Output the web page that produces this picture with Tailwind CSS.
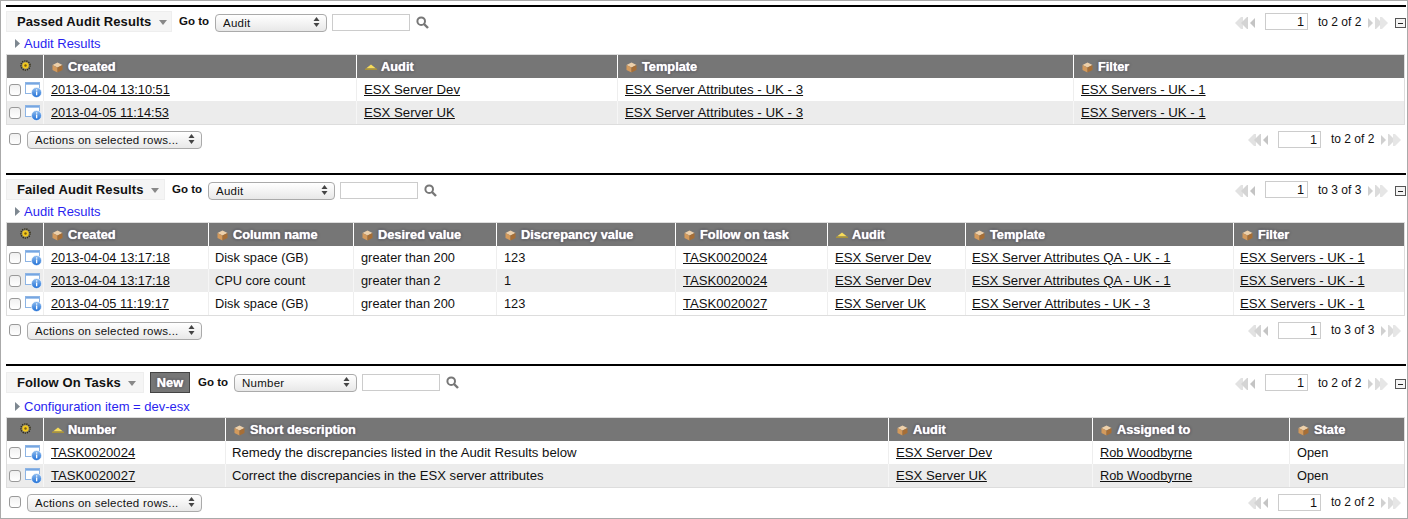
<!DOCTYPE html>
<html lang="en">
<head>
<meta charset="UTF-8">
<title>Audit Results</title>
<script src="https://cdn.jsdelivr.net/npm/@tailwindcss/browser@4"></script>
</head>
<body class="h-[519px] w-[1408px] overflow-hidden bg-white font-['Liberation_Sans',Arial,sans-serif] text-[12.8px] text-[#111]">

<svg class="absolute h-0 w-0">
  <defs>
    <linearGradient id="info-ball" x1="0" y1="0" x2="0" y2="1"><stop offset="0" stop-color="#8fbdf0"/><stop offset="1" stop-color="#1f6fd6"/></linearGradient>
    <linearGradient id="info-bar" x1="0" y1="0" x2="0" y2="1"><stop offset="0" stop-color="#5f97dc"/><stop offset="1" stop-color="#b9d3f2"/></linearGradient>
  </defs>
  <symbol id="cube" viewBox="0 0 11 11"><polygon points="5.5,0.5 10.5,3 5.5,5.5 0.5,3" fill="#edd0aa"/><polygon points="0.5,3 5.5,5.5 5.5,10.5 0.5,8" fill="#d39a5c"/><polygon points="10.5,3 5.5,5.5 5.5,10.5 10.5,8" fill="#a66e36"/></symbol>
  <symbol id="sort" viewBox="0 0 12 6"><polygon points="6,0.5 11,4.5 1,4.5" fill="#f7dc5a"/><rect x="0" y="4.5" width="12" height="1.5" fill="#a8923a"/></symbol>
  <symbol id="gear" viewBox="0 0 11 11"><circle cx="5.5" cy="5.5" r="4.6" fill="none" stroke="#2f2a10" stroke-width="1.4" stroke-dasharray="1.2 1"/><circle cx="5.5" cy="5.5" r="3.2" fill="#f2c81e"/><circle cx="5.5" cy="5.5" r="1.2" fill="#7a5c10"/></symbol>
  <symbol id="info" viewBox="0 0 17 16"><rect x="0.5" y="0.5" width="14" height="11" fill="#fff" stroke="#8db4e4"/><rect x="1" y="1" width="13" height="2" fill="url(#info-bar)"/><circle cx="11.5" cy="10.5" r="5" fill="url(#info-ball)" stroke="#fff" stroke-width="0.6"/><rect x="11" y="9.5" width="1.3" height="3.8" fill="#fff"/><rect x="11" y="7.4" width="1.3" height="1.2" fill="#fff"/></symbol>
  <symbol id="pager-back" viewBox="0 0 20 12"><polygon points="0,6 6,0 8,0 8,12 6,12" fill="#e2e2e2"/><polygon points="6,6 12,0 13,0 13,12 12,12" fill="#d4d4d4"/><polygon points="15,6 20,1 20,11" fill="#c4c4c4"/></symbol>
  <symbol id="pager-next" viewBox="0 0 20 12"><polygon points="0,1 5,6 0,11" fill="#d0d0d0"/><polygon points="7,0 8,0 14,6 8,12 7,12" fill="#dcdcdc"/><polygon points="12,0 14,0 20,6 14,12 12,12" fill="#e6e6e6"/></symbol>
  <symbol id="updown" viewBox="0 0 7 10"><polygon points="3.5,0 6.5,4 0.5,4" fill="#444"/><polygon points="3.5,10 6.5,6 0.5,6" fill="#444"/></symbol>
  <symbol id="search" viewBox="0 0 13 13"><circle cx="5.2" cy="5.2" r="3.8" fill="none" stroke="#777" stroke-width="2"/><line x1="8" y1="8" x2="12" y2="12" stroke="#777" stroke-width="2.4"/></symbol>
  <symbol id="caret" viewBox="0 0 8 5"><polygon points="0,0 8,0 4,5" fill="#888"/></symbol>
  <symbol id="expand" viewBox="0 0 5 9"><polygon points="0,0 5,4.5 0,9" fill="#7d8790"/></symbol>
</svg>

<div class="flex h-full w-full flex-col border border-[#aaa] pt-[4px]">

  <!-- Passed audit results -->
  <section class="h-[168px]">
    <div class="ml-[5px] h-[2px] w-[1400px] bg-black"></div>
    <div class="flex h-[30px] items-start pl-[5px] pt-[4px]">
      <div class="flex h-[21px] w-[166px] items-center whitespace-nowrap border border-[#eee] bg-[#f5f5f5] pl-[10px] text-[13px] font-bold tracking-[0.1px]">Passed Audit Results<svg class="ml-[8px] mt-[2px] h-[5px] w-[8px]"><use href="#caret"/></svg></div>
      <span class="ml-[7px] mt-[2px] w-[30px] whitespace-nowrap text-[11.5px] font-bold">Go to</span>
      <div class="relative ml-[6px] mt-[2px] h-[18px] w-[112px]">
        <select class="h-full w-full appearance-none rounded-[4px] border border-[#aaa] bg-gradient-to-b from-white to-[#e8e8e8] pl-[7px] text-[11.5px] tracking-[0.25px]"><option>Audit</option></select>
        <svg class="pointer-events-none absolute right-[7px] top-[4px] h-[10px] w-[7px]"><use href="#updown"/></svg>
      </div>
      <input class="ml-[5px] mt-[3px] h-[17px] w-[78px] border border-[#ccc]">
      <svg class="ml-[6px] mt-[5px] h-[13px] w-[13px]"><use href="#search"/></svg>
      <div class="ml-auto flex items-start pr-[1px] pt-[2px]">
        <svg class="mt-[4px] h-[12px] w-[20px]"><use href="#pager-back"/></svg>
        <input class="ml-[10px] h-[17px] w-[43px] border border-[#ccc] pr-[3px] text-right text-[12.8px]" value="1">
        <span class="ml-[10px] w-[42px] whitespace-nowrap text-[12px]">to 2 of 2</span>
        <svg class="ml-[8px] mt-[4px] h-[12px] w-[20px]"><use href="#pager-next"/></svg>
        <div class="ml-[7px] mt-[5px] flex h-[10px] w-[11px] items-center justify-center border border-[#555] bg-[#f4f4f4]"><div class="h-px w-[5px] bg-[#222]"></div></div>
      </div>
    </div>
    <div class="flex h-[17px] items-center pb-[4px] pl-[14px] text-[13px] text-[#2a1ff0]"><svg class="mr-[4px] h-[9px] w-[5px]"><use href="#expand"/></svg>Audit Results</div>
    <div class="ml-[5px] w-[1399px] border border-[#ddd]">
      <table class="w-[1397px] table-fixed border-separate border-spacing-0">
        <thead>
          <tr class="h-[23px] bg-[#767676] text-left font-bold text-white [text-shadow:0_0_1px_#fff,0_0_3px_#223]">
            <th class="w-[36px] text-center"><svg class="mx-auto mb-[3px] h-[11px] w-[11px]"><use href="#gear"/></svg></th>
            <th class="w-[313px] border-l border-white pl-[8px] font-bold"><div class="flex items-center"><svg class="mr-[5px] mt-[1px] h-[11px] w-[11px]"><use href="#cube"/></svg>Created</div></th>
            <th class="w-[261px] border-l border-white pl-[8px] font-bold"><div class="flex items-center"><svg class="mr-[4px] h-[6px] w-[12px]"><use href="#sort"/></svg>Audit</div></th>
            <th class="w-[456px] border-l border-white pl-[8px] font-bold"><div class="flex items-center"><svg class="mr-[5px] mt-[1px] h-[11px] w-[11px]"><use href="#cube"/></svg>Template</div></th>
            <th class="border-l border-white pl-[8px] font-bold"><div class="flex items-center"><svg class="mr-[5px] mt-[1px] h-[11px] w-[11px]"><use href="#cube"/></svg>Filter</div></th>
          </tr>
        </thead>
        <tbody>
          <tr class="h-[23px]">
            <td class="pl-[2px]"><div class="flex items-center gap-[4px]"><input type="checkbox" class="h-[12px] w-[12px] appearance-none rounded-[3px] border border-[#999] bg-gradient-to-b from-[#f0f0f0] to-white"><svg class="h-[16px] w-[17px]"><use href="#info"/></svg></div></td>
            <td class="border-l border-[#eee] pl-[7px]"><a href="#" class="underline">2013-04-04 13:10:51</a></td>
            <td class="border-l border-[#eee] pl-[7px] text-[13.2px]"><a href="#" class="underline">ESX Server Dev</a></td>
            <td class="border-l border-[#eee] pl-[7px] text-[13.3px]"><a href="#" class="underline">ESX Server Attributes - UK - 3</a></td>
            <td class="border-l border-[#eee] pl-[7px] text-[13.2px]"><a href="#" class="underline">ESX Servers - UK - 1</a></td>
          </tr>
          <tr class="h-[23px] bg-[#ececec]">
            <td class="pl-[2px]"><div class="flex items-center gap-[4px]"><input type="checkbox" class="h-[12px] w-[12px] appearance-none rounded-[3px] border border-[#999] bg-gradient-to-b from-[#f0f0f0] to-white"><svg class="h-[16px] w-[17px]"><use href="#info"/></svg></div></td>
            <td class="border-l border-[#f6f6f6] pl-[7px]"><a href="#" class="underline">2013-04-05 11:14:53</a></td>
            <td class="border-l border-[#f6f6f6] pl-[7px] text-[13.2px]"><a href="#" class="underline">ESX Server UK</a></td>
            <td class="border-l border-[#f6f6f6] pl-[7px] text-[13.3px]"><a href="#" class="underline">ESX Server Attributes - UK - 3</a></td>
            <td class="border-l border-[#f6f6f6] pl-[7px] text-[13.2px]"><a href="#" class="underline">ESX Servers - UK - 1</a></td>
          </tr>
        </tbody>
      </table>
    </div>
    <div class="flex items-start pl-[8px] pt-[5px]">
      <input type="checkbox" class="mt-[3px] h-[12px] w-[12px] appearance-none rounded-[3px] border border-[#999] bg-gradient-to-b from-[#f0f0f0] to-white">
      <div class="relative ml-[6px] h-[18px] w-[175px]">
        <select class="h-full w-full appearance-none rounded-[4px] border border-[#aaa] bg-gradient-to-b from-white to-[#e8e8e8] pl-[7px] text-[11.5px] tracking-[0.25px]"><option>Actions on selected rows...</option></select>
        <svg class="pointer-events-none absolute right-[7px] top-[4px] h-[10px] w-[7px]"><use href="#updown"/></svg>
      </div>
      <div class="ml-auto flex items-start pr-[6px] pt-[1px]">
        <svg class="mt-[3px] h-[12px] w-[20px]"><use href="#pager-back"/></svg>
        <input class="ml-[10px] h-[17px] w-[43px] border border-[#ccc] pr-[3px] text-right text-[12.8px]" value="1">
        <span class="ml-[10px] -mt-px w-[42px] whitespace-nowrap text-[12px]">to 2 of 2</span>
        <svg class="ml-[8px] mt-[3px] h-[12px] w-[20px]"><use href="#pager-next"/></svg>
      </div>
    </div>
  </section>

  <!-- Failed audit results -->
  <section class="h-[191px]">
    <div class="ml-[5px] h-[2px] w-[1400px] bg-black"></div>
    <div class="flex h-[30px] items-start pl-[5px] pt-[4px]">
      <div class="flex h-[21px] w-[159px] items-center whitespace-nowrap border border-[#eee] bg-[#f5f5f5] pl-[10px] text-[13px] font-bold tracking-[0.1px]">Failed Audit Results<svg class="ml-[8px] mt-[2px] h-[5px] w-[8px]"><use href="#caret"/></svg></div>
      <span class="ml-[7px] mt-[2px] w-[30px] whitespace-nowrap text-[11.5px] font-bold">Go to</span>
      <div class="relative ml-[6px] mt-[2px] h-[18px] w-[127px]">
        <select class="h-full w-full appearance-none rounded-[4px] border border-[#aaa] bg-gradient-to-b from-white to-[#e8e8e8] pl-[7px] text-[11.5px] tracking-[0.25px]"><option>Audit</option></select>
        <svg class="pointer-events-none absolute right-[7px] top-[4px] h-[10px] w-[7px]"><use href="#updown"/></svg>
      </div>
      <input class="ml-[5px] mt-[3px] h-[17px] w-[78px] border border-[#ccc]">
      <svg class="ml-[6px] mt-[5px] h-[13px] w-[13px]"><use href="#search"/></svg>
      <div class="ml-auto flex items-start pr-[1px] pt-[2px]">
        <svg class="mt-[4px] h-[12px] w-[20px]"><use href="#pager-back"/></svg>
        <input class="ml-[10px] h-[17px] w-[43px] border border-[#ccc] pr-[3px] text-right text-[12.8px]" value="1">
        <span class="ml-[10px] w-[42px] whitespace-nowrap text-[12px]">to 3 of 3</span>
        <svg class="ml-[8px] mt-[4px] h-[12px] w-[20px]"><use href="#pager-next"/></svg>
        <div class="ml-[7px] mt-[5px] flex h-[10px] w-[11px] items-center justify-center border border-[#555] bg-[#f4f4f4]"><div class="h-px w-[5px] bg-[#222]"></div></div>
      </div>
    </div>
    <div class="flex h-[17px] items-center pb-[4px] pl-[14px] text-[13px] text-[#2a1ff0]"><svg class="mr-[4px] h-[9px] w-[5px]"><use href="#expand"/></svg>Audit Results</div>
    <div class="ml-[5px] w-[1399px] border border-[#ddd]">
      <table class="w-[1397px] table-fixed border-separate border-spacing-0">
        <thead>
          <tr class="h-[23px] bg-[#767676] text-left font-bold text-white [text-shadow:0_0_1px_#fff,0_0_3px_#223]">
            <th class="w-[36px] text-center"><svg class="mx-auto mb-[3px] h-[11px] w-[11px]"><use href="#gear"/></svg></th>
            <th class="w-[165px] border-l border-white pl-[8px] font-bold"><div class="flex items-center"><svg class="mr-[5px] mt-[1px] h-[11px] w-[11px]"><use href="#cube"/></svg>Created</div></th>
            <th class="w-[145px] border-l border-white pl-[8px] font-bold"><div class="flex items-center"><svg class="mr-[5px] mt-[1px] h-[11px] w-[11px]"><use href="#cube"/></svg>Column name</div></th>
            <th class="w-[143px] border-l border-white pl-[8px] font-bold"><div class="flex items-center"><svg class="mr-[5px] mt-[1px] h-[11px] w-[11px]"><use href="#cube"/></svg>Desired value</div></th>
            <th class="w-[179px] border-l border-white pl-[8px] font-bold"><div class="flex items-center"><svg class="mr-[5px] mt-[1px] h-[11px] w-[11px]"><use href="#cube"/></svg>Discrepancy value</div></th>
            <th class="w-[152px] border-l border-white pl-[8px] font-bold"><div class="flex items-center"><svg class="mr-[5px] mt-[1px] h-[11px] w-[11px]"><use href="#cube"/></svg>Follow on task</div></th>
            <th class="w-[138px] border-l border-white pl-[8px] font-bold"><div class="flex items-center"><svg class="mr-[4px] h-[6px] w-[12px]"><use href="#sort"/></svg>Audit</div></th>
            <th class="w-[268px] border-l border-white pl-[8px] font-bold"><div class="flex items-center"><svg class="mr-[5px] mt-[1px] h-[11px] w-[11px]"><use href="#cube"/></svg>Template</div></th>
            <th class="border-l border-white pl-[8px] font-bold"><div class="flex items-center"><svg class="mr-[5px] mt-[1px] h-[11px] w-[11px]"><use href="#cube"/></svg>Filter</div></th>
          </tr>
        </thead>
        <tbody>
          <tr class="h-[23px]">
            <td class="pl-[2px]"><div class="flex items-center gap-[4px]"><input type="checkbox" class="h-[12px] w-[12px] appearance-none rounded-[3px] border border-[#999] bg-gradient-to-b from-[#f0f0f0] to-white"><svg class="h-[16px] w-[17px]"><use href="#info"/></svg></div></td>
            <td class="border-l border-[#eee] pl-[7px]"><a href="#" class="underline">2013-04-04 13:17:18</a></td>
            <td class="border-l border-[#eee] pl-[6px]">Disk space (GB)</td>
            <td class="border-l border-[#eee] pl-[7px]">greater than 200</td>
            <td class="border-l border-[#eee] pl-[7px]">123</td>
            <td class="border-l border-[#eee] pl-[7px] text-[13.1px]"><a href="#" class="underline">TASK0020024</a></td>
            <td class="border-l border-[#eee] pl-[7px] text-[13.2px]"><a href="#" class="underline">ESX Server Dev</a></td>
            <td class="border-l border-[#eee] pl-[6px] text-[13.2px]"><a href="#" class="underline">ESX Server Attributes QA - UK - 1</a></td>
            <td class="border-l border-[#eee] pl-[6px] text-[13.2px]"><a href="#" class="underline">ESX Servers - UK - 1</a></td>
          </tr>
          <tr class="h-[23px] bg-[#ececec]">
            <td class="pl-[2px]"><div class="flex items-center gap-[4px]"><input type="checkbox" class="h-[12px] w-[12px] appearance-none rounded-[3px] border border-[#999] bg-gradient-to-b from-[#f0f0f0] to-white"><svg class="h-[16px] w-[17px]"><use href="#info"/></svg></div></td>
            <td class="border-l border-[#f6f6f6] pl-[7px]"><a href="#" class="underline">2013-04-04 13:17:18</a></td>
            <td class="border-l border-[#f6f6f6] pl-[6px]">CPU core count</td>
            <td class="border-l border-[#f6f6f6] pl-[7px]">greater than 2</td>
            <td class="border-l border-[#f6f6f6] pl-[7px]">1</td>
            <td class="border-l border-[#f6f6f6] pl-[7px] text-[13.1px]"><a href="#" class="underline">TASK0020024</a></td>
            <td class="border-l border-[#f6f6f6] pl-[7px] text-[13.2px]"><a href="#" class="underline">ESX Server Dev</a></td>
            <td class="border-l border-[#f6f6f6] pl-[6px] text-[13.2px]"><a href="#" class="underline">ESX Server Attributes QA - UK - 1</a></td>
            <td class="border-l border-[#f6f6f6] pl-[6px] text-[13.2px]"><a href="#" class="underline">ESX Servers - UK - 1</a></td>
          </tr>
          <tr class="h-[23px]">
            <td class="pl-[2px]"><div class="flex items-center gap-[4px]"><input type="checkbox" class="h-[12px] w-[12px] appearance-none rounded-[3px] border border-[#999] bg-gradient-to-b from-[#f0f0f0] to-white"><svg class="h-[16px] w-[17px]"><use href="#info"/></svg></div></td>
            <td class="border-l border-[#eee] pl-[7px]"><a href="#" class="underline">2013-04-05 11:19:17</a></td>
            <td class="border-l border-[#eee] pl-[6px]">Disk space (GB)</td>
            <td class="border-l border-[#eee] pl-[7px]">greater than 200</td>
            <td class="border-l border-[#eee] pl-[7px]">123</td>
            <td class="border-l border-[#eee] pl-[7px] text-[13.1px]"><a href="#" class="underline">TASK0020027</a></td>
            <td class="border-l border-[#eee] pl-[7px] text-[13.2px]"><a href="#" class="underline">ESX Server UK</a></td>
            <td class="border-l border-[#eee] pl-[6px] text-[13.3px]"><a href="#" class="underline">ESX Server Attributes - UK - 3</a></td>
            <td class="border-l border-[#eee] pl-[6px] text-[13.2px]"><a href="#" class="underline">ESX Servers - UK - 1</a></td>
          </tr>
        </tbody>
      </table>
    </div>
    <div class="flex items-start pl-[8px] pt-[5px]">
      <input type="checkbox" class="mt-[3px] h-[12px] w-[12px] appearance-none rounded-[3px] border border-[#999] bg-gradient-to-b from-[#f0f0f0] to-white">
      <div class="relative ml-[6px] h-[18px] w-[175px]">
        <select class="h-full w-full appearance-none rounded-[4px] border border-[#aaa] bg-gradient-to-b from-white to-[#e8e8e8] pl-[7px] text-[11.5px] tracking-[0.25px]"><option>Actions on selected rows...</option></select>
        <svg class="pointer-events-none absolute right-[7px] top-[4px] h-[10px] w-[7px]"><use href="#updown"/></svg>
      </div>
      <div class="ml-auto flex items-start pr-[6px] pt-[1px]">
        <svg class="mt-[3px] h-[12px] w-[20px]"><use href="#pager-back"/></svg>
        <input class="ml-[10px] h-[17px] w-[43px] border border-[#ccc] pr-[3px] text-right text-[12.8px]" value="1">
        <span class="ml-[10px] -mt-px w-[42px] whitespace-nowrap text-[12px]">to 3 of 3</span>
        <svg class="ml-[8px] mt-[3px] h-[12px] w-[20px]"><use href="#pager-next"/></svg>
      </div>
    </div>
  </section>

  <!-- Follow on tasks -->
  <section>
    <div class="ml-[5px] h-[2px] w-[1400px] bg-black"></div>
    <div class="flex h-[34px] items-start pl-[5px] pt-[6px]">
      <div class="flex h-[21px] w-[138px] items-center whitespace-nowrap border border-[#eee] bg-[#f5f5f5] pl-[10px] text-[13px] font-bold tracking-[0.1px]">Follow On Tasks<svg class="ml-[7px] mt-[2px] h-[5px] w-[8px]"><use href="#caret"/></svg></div>
      <button class="ml-[6px] h-[21px] w-[40px] border border-[#444] bg-[#767676] text-[12.8px] font-bold text-white [text-shadow:0_0_1px_#fff,0_0_3px_#223]">New</button>
      <span class="ml-[8px] mt-[2px] w-[30px] whitespace-nowrap text-[11.5px] font-bold">Go to</span>
      <div class="relative ml-[6px] mt-[1px] h-[18px] w-[123px]">
        <select class="h-full w-full appearance-none rounded-[4px] border border-[#aaa] bg-gradient-to-b from-white to-[#e8e8e8] pl-[7px] text-[11.5px] tracking-[0.25px]"><option>Number</option></select>
        <svg class="pointer-events-none absolute right-[7px] top-[4px] h-[10px] w-[7px]"><use href="#updown"/></svg>
      </div>
      <input class="ml-[5px] mt-[2px] h-[17px] w-[78px] border border-[#ccc]">
      <svg class="ml-[6px] mt-[4px] h-[13px] w-[13px]"><use href="#search"/></svg>
      <div class="ml-auto flex items-start pr-[1px] pt-[2px]">
        <svg class="mt-[4px] h-[12px] w-[20px]"><use href="#pager-back"/></svg>
        <input class="ml-[10px] h-[17px] w-[43px] border border-[#ccc] pr-[3px] text-right text-[12.8px]" value="1">
        <span class="ml-[10px] w-[42px] whitespace-nowrap text-[12px]">to 2 of 2</span>
        <svg class="ml-[8px] mt-[4px] h-[12px] w-[20px]"><use href="#pager-next"/></svg>
        <div class="ml-[7px] mt-[5px] flex h-[10px] w-[11px] items-center justify-center border border-[#555] bg-[#f4f4f4]"><div class="h-px w-[5px] bg-[#222]"></div></div>
      </div>
    </div>
    <div class="flex h-[17px] items-center pb-[4px] pl-[14px] text-[13px] text-[#2a1ff0]"><svg class="mr-[4px] h-[9px] w-[5px]"><use href="#expand"/></svg>Configuration item = dev-esx</div>
    <div class="ml-[5px] w-[1399px] border border-[#ddd]">
      <table class="w-[1397px] table-fixed border-separate border-spacing-0">
        <thead>
          <tr class="h-[23px] bg-[#767676] text-left font-bold text-white [text-shadow:0_0_1px_#fff,0_0_3px_#223]">
            <th class="w-[36px] text-center"><svg class="mx-auto mb-[3px] h-[11px] w-[11px]"><use href="#gear"/></svg></th>
            <th class="w-[182px] border-l border-white pl-[8px] font-bold"><div class="flex items-center"><svg class="mr-[4px] h-[6px] w-[12px]"><use href="#sort"/></svg>Number</div></th>
            <th class="w-[663px] border-l border-white pl-[8px] font-bold"><div class="flex items-center"><svg class="mr-[5px] mt-[1px] h-[11px] w-[11px]"><use href="#cube"/></svg>Short description</div></th>
            <th class="w-[204px] border-l border-white pl-[8px] font-bold"><div class="flex items-center"><svg class="mr-[5px] mt-[1px] h-[11px] w-[11px]"><use href="#cube"/></svg>Audit</div></th>
            <th class="w-[197px] border-l border-white pl-[8px] font-bold"><div class="flex items-center"><svg class="mr-[5px] mt-[1px] h-[11px] w-[11px]"><use href="#cube"/></svg>Assigned to</div></th>
            <th class="border-l border-white pl-[8px] font-bold"><div class="flex items-center"><svg class="mr-[5px] mt-[1px] h-[11px] w-[11px]"><use href="#cube"/></svg>State</div></th>
          </tr>
        </thead>
        <tbody>
          <tr class="h-[23px]">
            <td class="pl-[2px]"><div class="flex items-center gap-[4px]"><input type="checkbox" class="h-[12px] w-[12px] appearance-none rounded-[3px] border border-[#999] bg-gradient-to-b from-[#f0f0f0] to-white"><svg class="h-[16px] w-[17px]"><use href="#info"/></svg></div></td>
            <td class="border-l border-[#eee] pl-[7px] text-[13.1px]"><a href="#" class="underline">TASK0020024</a></td>
            <td class="border-l border-[#eee] pl-[6px] text-[13.2px]">Remedy the discrepancies listed in the Audit Results below</td>
            <td class="border-l border-[#eee] pl-[7px] text-[13.2px]"><a href="#" class="underline">ESX Server Dev</a></td>
            <td class="border-l border-[#eee] pl-[7px]"><a href="#" class="underline">Rob Woodbyrne</a></td>
            <td class="border-l border-[#eee] pl-[7px]">Open</td>
          </tr>
          <tr class="h-[23px] bg-[#ececec]">
            <td class="pl-[2px]"><div class="flex items-center gap-[4px]"><input type="checkbox" class="h-[12px] w-[12px] appearance-none rounded-[3px] border border-[#999] bg-gradient-to-b from-[#f0f0f0] to-white"><svg class="h-[16px] w-[17px]"><use href="#info"/></svg></div></td>
            <td class="border-l border-[#f6f6f6] pl-[7px] text-[13.1px]"><a href="#" class="underline">TASK0020027</a></td>
            <td class="border-l border-[#f6f6f6] pl-[6px] text-[13.1px]">Correct the discrepancies in the ESX server attributes</td>
            <td class="border-l border-[#f6f6f6] pl-[7px] text-[13.2px]"><a href="#" class="underline">ESX Server UK</a></td>
            <td class="border-l border-[#f6f6f6] pl-[7px]"><a href="#" class="underline">Rob Woodbyrne</a></td>
            <td class="border-l border-[#f6f6f6] pl-[7px]">Open</td>
          </tr>
        </tbody>
      </table>
    </div>
    <div class="flex items-start pl-[8px] pt-[5px]">
      <input type="checkbox" class="mt-[3px] h-[12px] w-[12px] appearance-none rounded-[3px] border border-[#999] bg-gradient-to-b from-[#f0f0f0] to-white">
      <div class="relative ml-[6px] h-[18px] w-[175px]">
        <select class="h-full w-full appearance-none rounded-[4px] border border-[#aaa] bg-gradient-to-b from-white to-[#e8e8e8] pl-[7px] text-[11.5px] tracking-[0.25px]"><option>Actions on selected rows...</option></select>
        <svg class="pointer-events-none absolute right-[7px] top-[4px] h-[10px] w-[7px]"><use href="#updown"/></svg>
      </div>
      <div class="ml-auto flex items-start pr-[6px] pt-[1px]">
        <svg class="mt-[3px] h-[12px] w-[20px]"><use href="#pager-back"/></svg>
        <input class="ml-[10px] h-[17px] w-[43px] border border-[#ccc] pr-[3px] text-right text-[12.8px]" value="1">
        <span class="ml-[10px] -mt-px w-[42px] whitespace-nowrap text-[12px]">to 2 of 2</span>
        <svg class="ml-[8px] mt-[3px] h-[12px] w-[20px]"><use href="#pager-next"/></svg>
      </div>
    </div>
  </section>

</div>
</body>
</html>
